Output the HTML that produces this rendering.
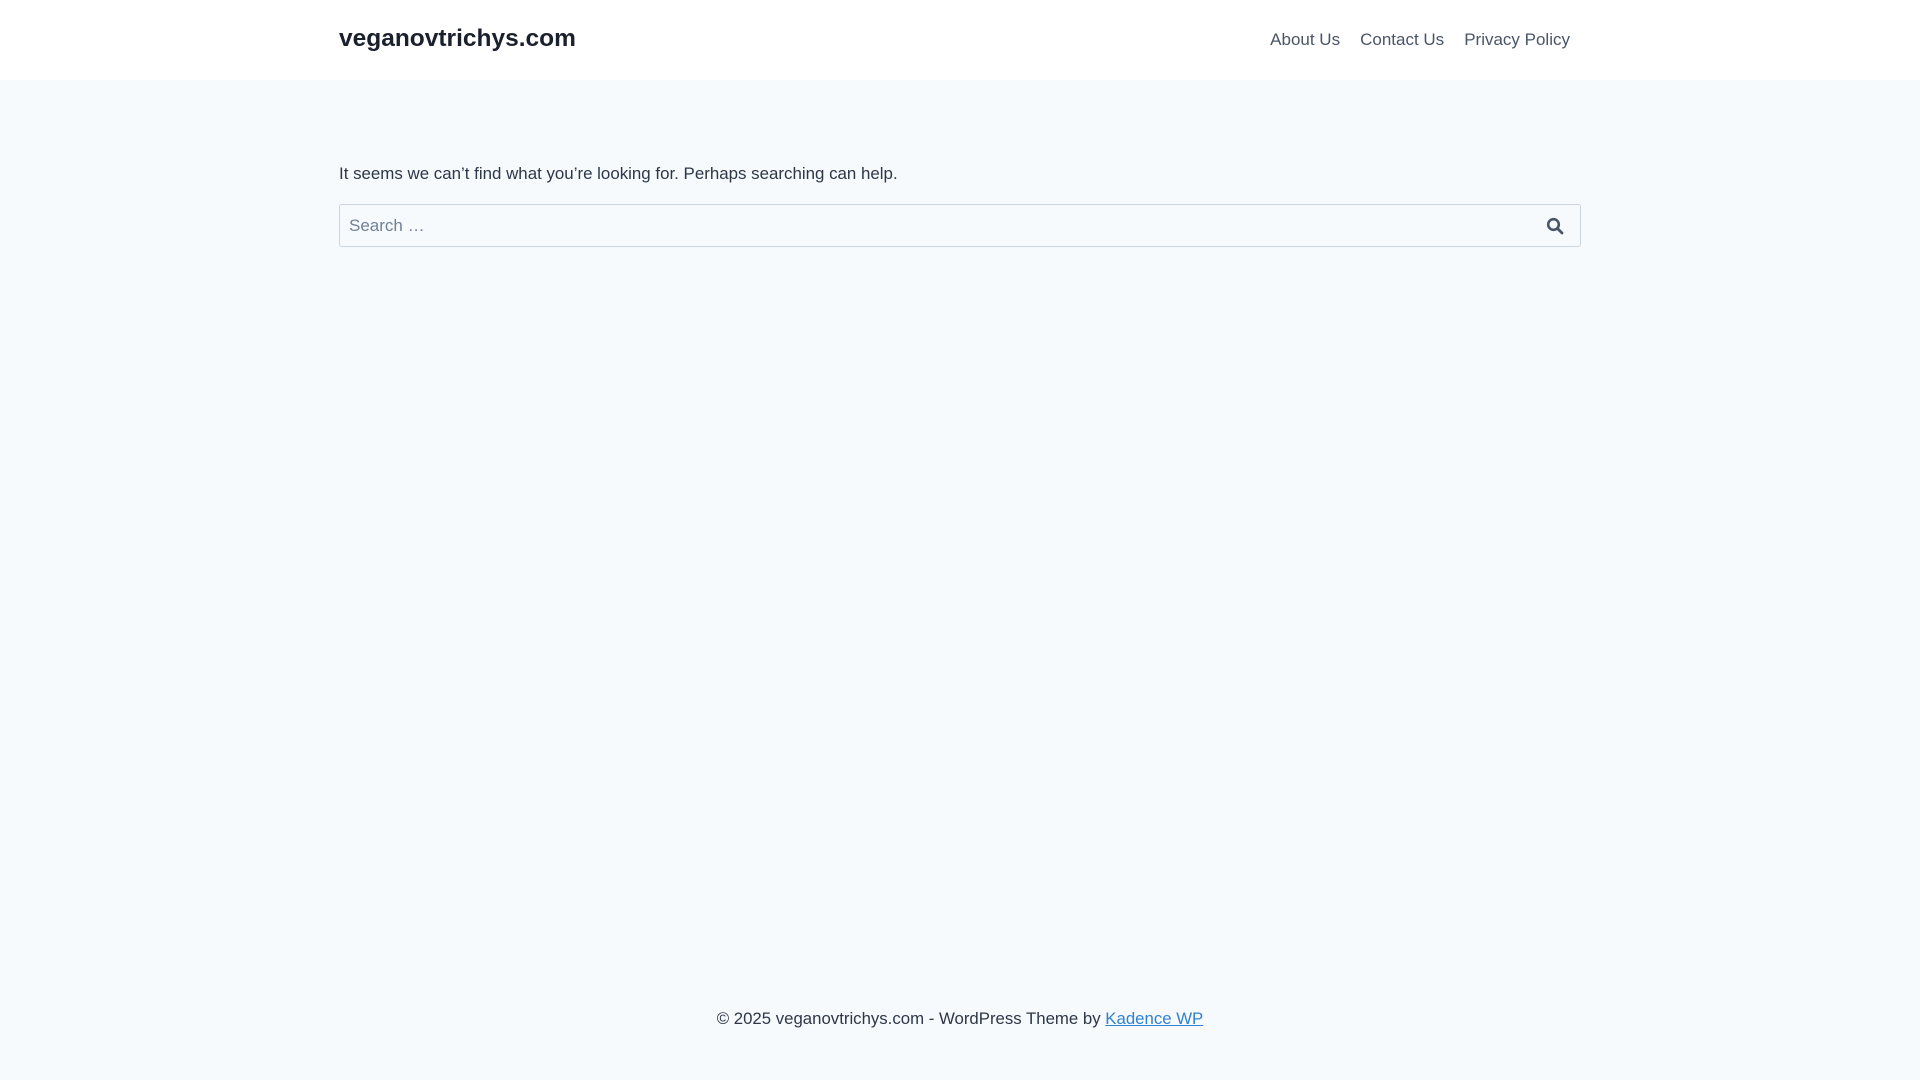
<!DOCTYPE html>
<html><head><meta charset="utf-8"><style>
*{box-sizing:border-box;margin:0;padding:0}
body{width:1920px;height:1080px;background:#f7fafc;font-family:"Liberation Sans",sans-serif;color:#2d3748;position:relative;overflow:hidden}
header{position:absolute;top:0;left:0;width:1920px;height:80px;background:#fff}
.logo{position:absolute;left:339px;top:25px;font-size:24.5px;font-weight:bold;color:#1a202c}
nav{position:absolute;right:350px;top:30px;font-size:17px;color:#4a5568}
nav span{margin-left:20px}
.msg{position:absolute;left:339px;top:164px;font-size:16.9px}
.search{position:absolute;left:339px;top:204px;width:1242px;height:43px;border:1px solid #cbd5e0;border-radius:3px;background:#f7fafc}
.search span{position:absolute;left:9px;top:11px;font-size:17px;color:#718096}
.search svg{position:absolute;right:16px;top:12px}
footer{position:absolute;top:1009px;width:1920px;text-align:center;font-size:16.8px}
footer a{color:#3182ce;text-decoration:underline}
</style></head><body>
<header><div class="logo">veganovtrichys.com</div>
<nav><span>About Us</span><span>Contact Us</span><span>Privacy Policy</span></nav></header>
<div class="msg">It seems we can’t find what you’re looking for. Perhaps searching can help.</div>
<div class="search"><span>Search …</span>
<svg width="18" height="18" viewBox="0 0 18 18"><circle cx="7.5" cy="7.5" r="5.3" fill="none" stroke="#4a5568" stroke-width="2.6"/><path d="M11.5 11.5L16 16" stroke="#4a5568" stroke-width="2.8" stroke-linecap="round"/></svg></div>
<footer>© 2025 veganovtrichys.com - WordPress Theme by <a>Kadence WP</a></footer>
</body></html>
